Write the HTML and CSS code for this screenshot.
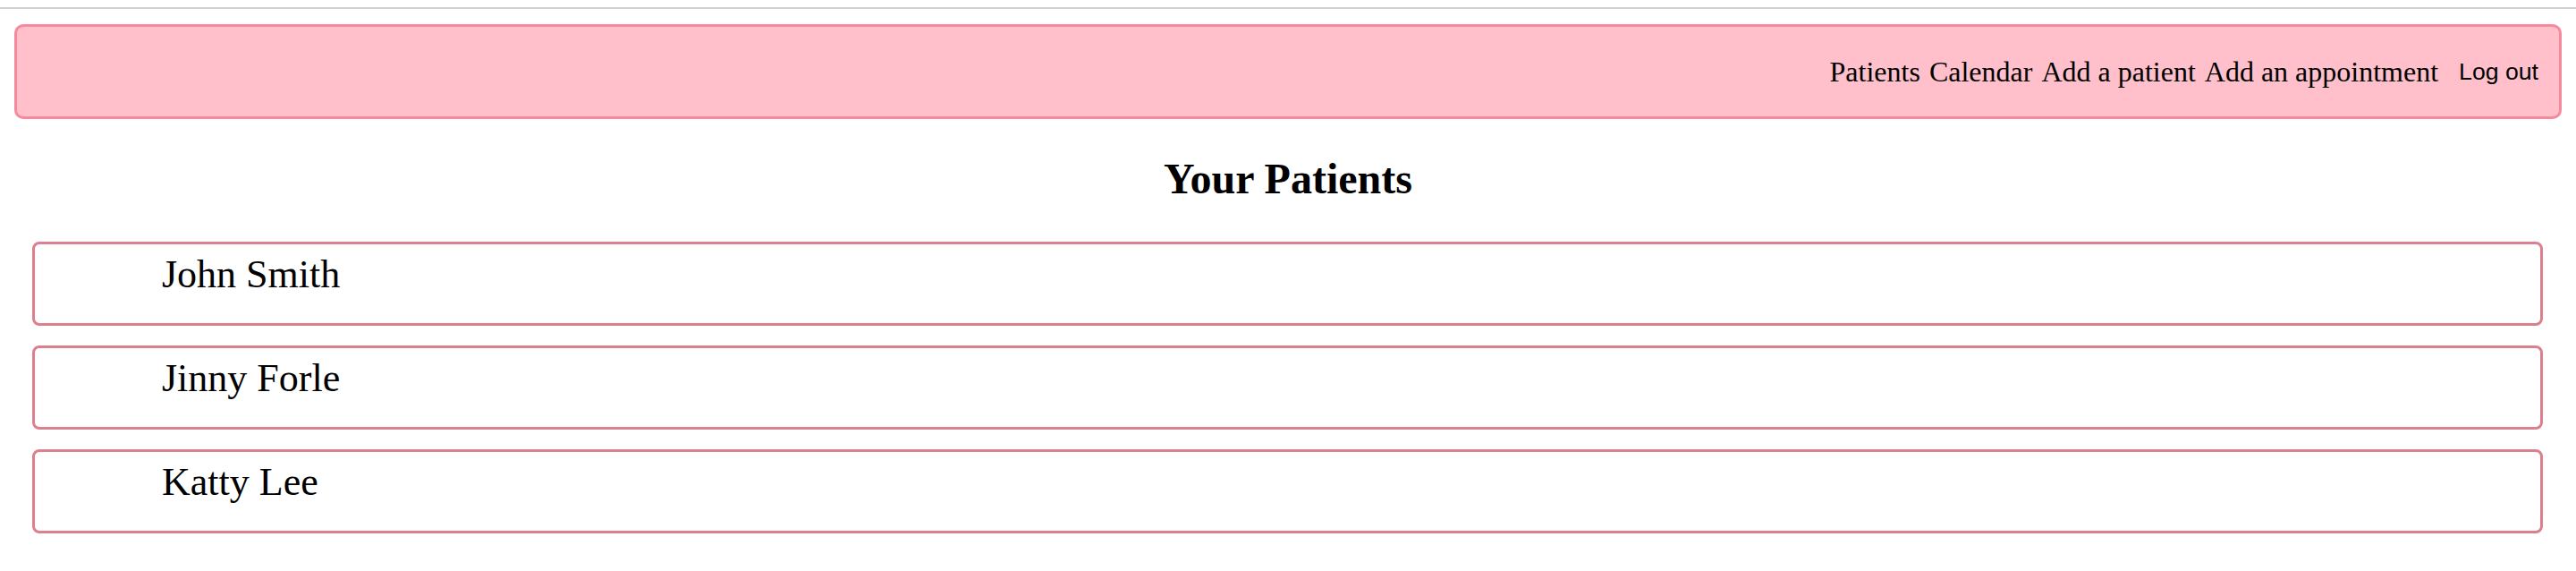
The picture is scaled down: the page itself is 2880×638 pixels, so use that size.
FILE: index.html
```html
<!DOCTYPE html>
<html lang="en">
<head>
<meta charset="utf-8">
<title>Your Patients</title>
<link rel="stylesheet" href="styles.css">
</head>
<body>
<div class="topline"></div>
<nav class="navbar">
  <a class="nav-link" href="#">Patients</a>
  <a class="nav-link" href="#">Calendar</a>
  <a class="nav-link" href="#">Add a patient</a>
  <a class="nav-link" href="#">Add an appointment</a>
  <button class="logout" type="button">Log out</button>
</nav>
<h2 class="title">Your Patients</h2>
<ul class="patients">
  <li class="patient">John Smith</li>
  <li class="patient">Jinny Forle</li>
  <li class="patient">Katty Lee</li>
</ul>
</body>
</html>
```
FILE: styles.css
```css
html, body {
  margin: 0;
  padding: 0;
  background: #ffffff;
  font-family: "Liberation Serif", "Times New Roman", serif;
  color: #000000;
}

.topline {
  margin-top: 8px;
  height: 2px;
  background: #d2d2d2;
}

.navbar {
  margin: 17px 16px 0 16px;
  height: 100px;
  border: 3px solid #f58a9c;
  border-radius: 10px;
  background: #ffc0cb;
  display: flex;
  align-items: center;
  justify-content: flex-end;
  gap: 10px;
  padding-right: 11px;
}

.nav-link {
  font-family: "Liberation Serif", "Times New Roman", serif;
  font-size: 32px;
  line-height: 37px;
  color: #000000;
  text-decoration: none;
}

.logout {
  margin-left: 1px;
  font-family: "Liberation Sans", Arial, sans-serif;
  font-size: 26.67px;
  line-height: 31px;
  padding: 2px 12px;
  border: none;
  background: transparent;
  color: #000000;
}

.title {
  margin: 40px 0 0 0;
  text-align: center;
  font-size: 48px;
  line-height: 54px;
  font-weight: bold;
}

.patients {
  list-style: none;
  margin: 43px 37px 0 36px;
  padding: 0;
  display: flex;
  flex-direction: column;
  gap: 22px;
}

.patient {
  border: 3px solid #dc7f8e;
  border-radius: 8px;
  padding: 9px 0 29px 142px;
  font-size: 44px;
  line-height: 50px;
}
```
